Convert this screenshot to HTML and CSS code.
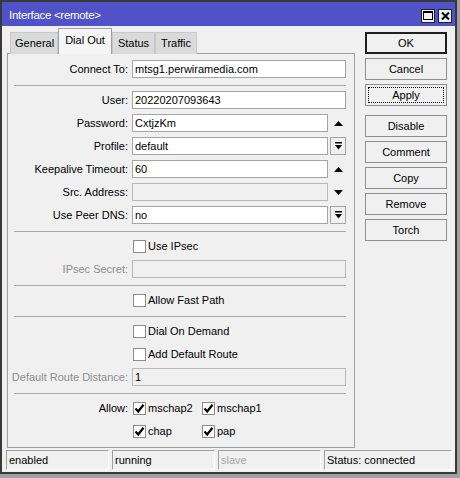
FILE: index.html
```html
<!DOCTYPE html>
<html>
<head>
<meta charset="utf-8">
<link rel="stylesheet" href="styles.css">
</head>
<body>
<div class="window">
  <div class="titlebar">
    <span class="title">Interface &lt;remote&gt;</span>
    <div class="tb-buttons">
      <span class="tb-btn"><svg width="10" height="9" viewBox="0 0 10 9"><rect x="0.5" y="0.5" width="9" height="8" fill="none" stroke="#000"/><rect x="0" y="0" width="10" height="2" fill="#000"/></svg></span>
      <span class="tb-btn"><svg width="9" height="8" viewBox="0 0 9 8"><path d="M1 0.5 L8 7.5 M8 0.5 L1 7.5" stroke="#000" stroke-width="2"/></svg></span>
    </div>
  </div>
  <div class="client">
    <div class="main">
      <div class="left">
        <div class="tabs">
          <div class="tab first">General</div>
          <div class="tab active">Dial Out</div>
          <div class="tab">Status</div>
          <div class="tab">Traffic</div>
        </div>
        <div class="panel">
          <div class="row">
            <label class="lbl">Connect To:</label>
            <div class="input">mtsg1.perwiramedia.com</div>
          </div>
          <div class="sep"></div>
          <div class="row">
            <label class="lbl">User:</label>
            <div class="input">20220207093643</div>
          </div>
          <div class="row">
            <label class="lbl">Password:</label>
            <div class="field">
              <div class="input">CxtjzKm</div>
              <span class="tail"><svg width="9" height="5" viewBox="0 0 9 5"><polygon points="0,5 4.5,0 9,5" fill="#000"/></svg></span>
            </div>
          </div>
          <div class="row">
            <label class="lbl">Profile:</label>
            <div class="field">
              <div class="input">default</div>
              <span class="tail drop"><svg width="7" height="8" viewBox="0 0 7 8"><rect x="0" y="0" width="7" height="1.5" fill="#000"/><polygon points="0,3 7,3 3.5,7.5" fill="#000"/></svg></span>
            </div>
          </div>
          <div class="row">
            <label class="lbl">Keepalive Timeout:</label>
            <div class="field">
              <div class="input">60</div>
              <span class="tail"><svg width="9" height="5" viewBox="0 0 9 5"><polygon points="0,5 4.5,0 9,5" fill="#000"/></svg></span>
            </div>
          </div>
          <div class="row">
            <label class="lbl">Src. Address:</label>
            <div class="field">
              <div class="input disabled"></div>
              <span class="tail"><svg width="9" height="5" viewBox="0 0 9 5"><polygon points="0,0 9,0 4.5,5" fill="#000"/></svg></span>
            </div>
          </div>
          <div class="row">
            <label class="lbl">Use Peer DNS:</label>
            <div class="field">
              <div class="input">no</div>
              <span class="tail drop"><svg width="7" height="8" viewBox="0 0 7 8"><rect x="0" y="0" width="7" height="1.5" fill="#000"/><polygon points="0,3 7,3 3.5,7.5" fill="#000"/></svg></span>
            </div>
          </div>
          <div class="sep"></div>
          <div class="row">
            <span class="lbl"></span>
            <div class="check"><span class="box"></span>Use IPsec</div>
          </div>
          <div class="row">
            <label class="lbl dim">IPsec Secret:</label>
            <div class="input disabled"></div>
          </div>
          <div class="sep"></div>
          <div class="row">
            <span class="lbl"></span>
            <div class="check"><span class="box"></span>Allow Fast Path</div>
          </div>
          <div class="sep"></div>
          <div class="row">
            <span class="lbl"></span>
            <div class="check"><span class="box"></span>Dial On Demand</div>
          </div>
          <div class="row">
            <span class="lbl"></span>
            <div class="check"><span class="box"></span>Add Default Route</div>
          </div>
          <div class="row">
            <label class="lbl dim">Default Route Distance:</label>
            <div class="input disabled">1</div>
          </div>
          <div class="sep"></div>
          <div class="row">
            <label class="lbl">Allow:</label>
            <div class="checks">
              <div class="check"><span class="box on"><svg width="11" height="11" viewBox="0 0 11 11"><path d="M1.5 5.5 L4.2 8.5 L9.5 1.8" fill="none" stroke="#000" stroke-width="2.2"/></svg></span>mschap2</div>
              <div class="check"><span class="box on"><svg width="11" height="11" viewBox="0 0 11 11"><path d="M1.5 5.5 L4.2 8.5 L9.5 1.8" fill="none" stroke="#000" stroke-width="2.2"/></svg></span>mschap1</div>
            </div>
          </div>
          <div class="row">
            <span class="lbl"></span>
            <div class="checks">
              <div class="check"><span class="box on"><svg width="11" height="11" viewBox="0 0 11 11"><path d="M1.5 5.5 L4.2 8.5 L9.5 1.8" fill="none" stroke="#000" stroke-width="2.2"/></svg></span>chap</div>
              <div class="check"><span class="box on"><svg width="11" height="11" viewBox="0 0 11 11"><path d="M1.5 5.5 L4.2 8.5 L9.5 1.8" fill="none" stroke="#000" stroke-width="2.2"/></svg></span>pap</div>
            </div>
          </div>
        </div>
      </div>
      <div class="buttons">
        <button class="btn default">OK</button>
        <button class="btn">Cancel</button>
        <button class="btn focus"><span>Apply</span></button>
        <button class="btn group">Disable</button>
        <button class="btn">Comment</button>
        <button class="btn">Copy</button>
        <button class="btn">Remove</button>
        <button class="btn">Torch</button>
      </div>
    </div>
    <div class="statusbar">
      <div class="cell c1">enabled</div>
      <div class="cell c2">running</div>
      <div class="cell c3 dim">slave</div>
      <div class="cell c4">Status: connected</div>
    </div>
  </div>
</div>
</body>
</html>
```

FILE: styles.css
```css
* { box-sizing: border-box; }
html, body { margin: 0; padding: 0; }
body {
  width: 460px;
  height: 478px;
  background: #a0a0a0;
  font-family: "Liberation Sans", Arial, sans-serif;
  font-size: 11px;
  color: #000;
  overflow: hidden;
}
.window {
  width: 457px;
  height: 474px;
  border: 2px solid #3a3a3a;
  display: flex;
  flex-direction: column;
  background: #f0f0f0;
}
.titlebar {
  height: 24px;
  background: #4f52c9;
  display: flex;
  align-items: center;
  justify-content: space-between;
  padding: 0 3px 0 7px;
}
.title {
  color: #fff;
  font-size: 11.5px;
  letter-spacing: -0.3px;
  padding-top: 2px;
}
.tb-buttons { display: flex; gap: 3px; padding-top: 3px; }
.tb-btn {
  width: 14px;
  height: 14px;
  background: #f0f0f0;
  border: 1px solid #202020;
  display: flex;
  align-items: center;
  justify-content: center;
}
.client {
  flex: 1;
  display: flex;
  flex-direction: column;
}
.main {
  display: flex;
  gap: 10px;
  padding: 2px 8px 0 5px;
}
.left { width: 348px; display: flex; flex-direction: column; }
.tabs {
  display: flex;
  align-items: flex-end;
  height: 26px;
  padding-left: 3px;
  position: relative;
  z-index: 1;
}
.tab {
  height: 22px;
  line-height: 21px;
  padding: 0 5px;
  background: #dadada;
  border: 1px solid #c8c8c8;
  border-bottom: none;
}
.tab.first { padding: 0 3px 0 4px; }
.tab.active {
  height: 26px;
  line-height: 22px;
  background: #f5f5f5;
  border-color: #a0a0a0;
  padding: 0 6px;
}
.panel {
  border: 1px solid #a0a0a0;
  margin-top: -1px;
  height: 395px;
  padding: 6px 8px 6px 0;
  display: flex;
  flex-direction: column;
  gap: 5px;
}
.row {
  display: grid;
  grid-template-columns: 120px 1fr;
  column-gap: 4px;
  height: 18px;
  align-items: center;
}
.lbl { text-align: right; white-space: nowrap; }
.dim { color: #8d8d8d; }
.input {
  height: 18px;
  border: 1px solid #a5a5a5;
  background: #fff;
  padding-left: 2px;
  line-height: 16px;
  white-space: nowrap;
  overflow: hidden;
}
.input.disabled { background: #f0f0f0; border-color: #b9b9b9; }
.field { display: flex; gap: 2px; height: 18px; }
.field .input { flex: 1; }
.tail {
  width: 16px;
  height: 18px;
  display: flex;
  align-items: center;
  justify-content: center;
}
.tail.drop { border: 1px solid #a5a5a5; }
.sep {
  height: 3px;
  margin-left: 6px;
  border-bottom: 1px solid #a9a9a9;
}
.check {
  display: flex;
  align-items: center;
  gap: 2px;
  white-space: nowrap;
}
.box {
  width: 13px;
  height: 13px;
  margin-left: 1px;
  background: #fff;
  border: 1px solid #8c8c8c;
  display: flex;
  align-items: center;
  justify-content: center;
}
.checks { display: grid; grid-template-columns: 69px 69px; }
.buttons {
  width: 82px;
  display: flex;
  flex-direction: column;
  gap: 4px;
  padding-top: 4px;
}
.btn {
  height: 22px;
  background: #f0f0f0;
  border: 1px solid #8f8f8f;
  font-family: inherit;
  font-size: 11px;
  color: #000;
  padding: 0;
}
.btn.default { border: 2px solid #1e1e1e; }
.btn.focus { padding: 2px; }
.btn.focus span {
  display: flex;
  height: 100%;
  align-items: center;
  justify-content: center;
  border: 1px dotted #000;
}
.btn.group { margin-top: 5px; }
.statusbar {
  display: flex;
  gap: 3px;
  padding: 0 0 0 4px;
  margin-top: 2px;
}
.cell {
  height: 20px;
  border: 1px solid;
  border-color: #a0a0a0 #fff #fff #a0a0a0;
  padding-left: 2px;
  line-height: 18px;
}
.c1, .c2, .c3 { width: 103px; }
.c4 { width: 128px; }
.cell.dim { color: #a8a8a8; }
```
